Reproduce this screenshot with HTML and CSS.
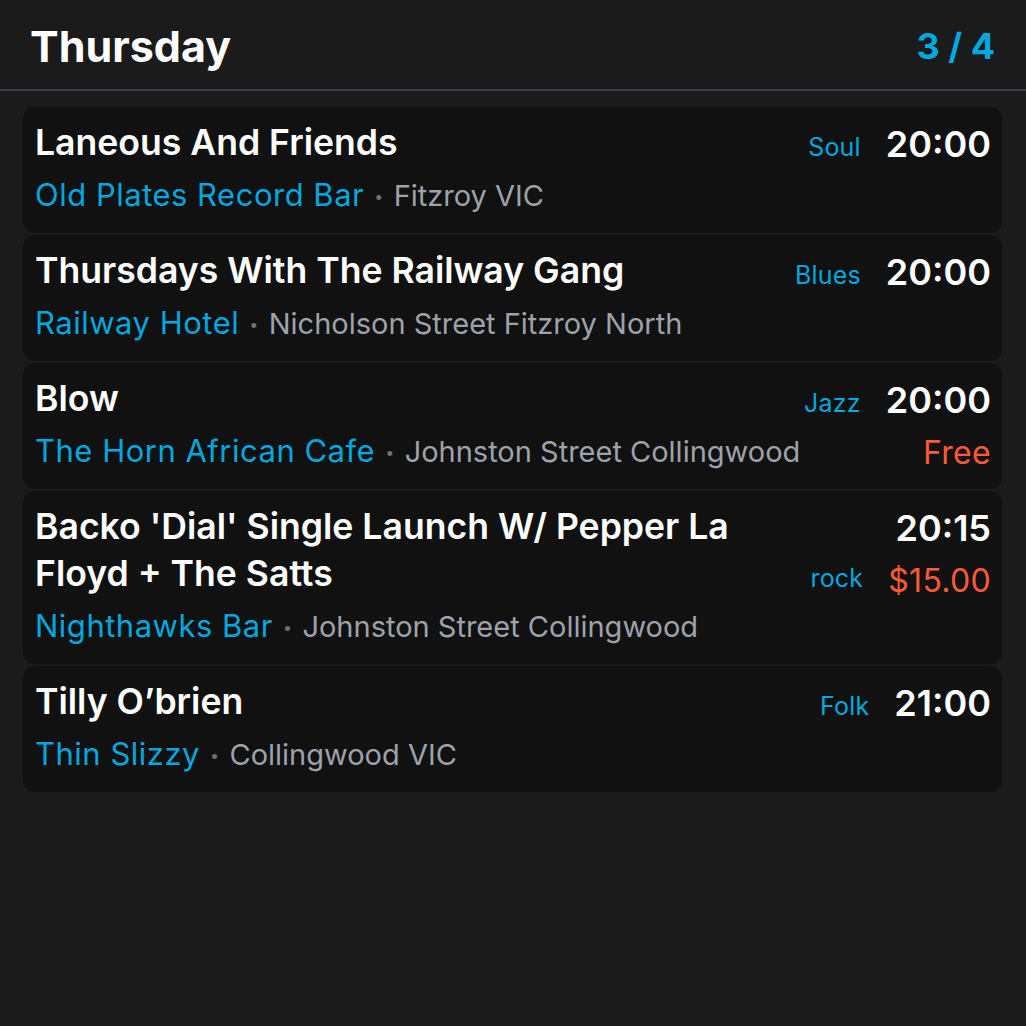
FILE: index.html
```html
<!DOCTYPE html>
<html lang="en">
<head>
<meta charset="utf-8">
<title>Thursday</title>
<link rel="stylesheet" href="styles.css">
</head>
<body>
<div class="app">
  <header class="header">
    <h1 class="day">Thursday</h1>
    <div class="counter">3 / 4</div>
  </header>
  <main class="list">
    <article class="card">
      <div class="title">Laneous And Friends</div>
      <div class="genre">Soul</div>
      <div class="when"><div class="time">20:00</div></div>
      <div class="venue"><span class="place">Old Plates Record Bar</span><span class="dot">•</span><span class="loc">Fitzroy VIC</span></div>
    </article>
    <article class="card">
      <div class="title">Thursdays With The Railway Gang</div>
      <div class="genre">Blues</div>
      <div class="when"><div class="time">20:00</div></div>
      <div class="venue"><span class="place">Railway Hotel</span><span class="dot">•</span><span class="loc">Nicholson Street Fitzroy North</span></div>
    </article>
    <article class="card">
      <div class="title">Blow</div>
      <div class="genre">Jazz</div>
      <div class="when"><div class="time">20:00</div><div class="price">Free</div></div>
      <div class="venue"><span class="place">The Horn African Cafe</span><span class="dot">•</span><span class="loc">Johnston Street Collingwood</span></div>
    </article>
    <article class="card">
      <div class="title">Backo 'Dial' Single Launch W/ Pepper La Floyd + The Satts</div>
      <div class="genre">rock</div>
      <div class="when"><div class="time">20:15</div><div class="price">$15.00</div></div>
      <div class="venue"><span class="place">Nighthawks Bar</span><span class="dot">•</span><span class="loc">Johnston Street Collingwood</span></div>
    </article>
    <article class="card">
      <div class="title">Tilly O’brien</div>
      <div class="genre">Folk</div>
      <div class="when"><div class="time">21:00</div></div>
      <div class="venue"><span class="place">Thin Slizzy</span><span class="dot">•</span><span class="loc">Collingwood VIC</span></div>
    </article>
  </main>
</div>
</body>
</html>
```
FILE: styles.css
```css
* { box-sizing: border-box; }
html, body {
  margin: 0;
  padding: 0;
  background: #1b1b1b;
  font-family: Inter, "Noto Sans", sans-serif;
  color: #ffffff;
}
.app {
  width: 1026px;
  min-height: 1026px;
  background: #1b1b1b;
}
.header {
  display: flex;
  align-items: center;
  justify-content: space-between;
  height: 91px;
  padding: 2px 31px 0 30px;
  border-bottom: 2px solid #3a404b;
}
.day {
  margin: 0;
  font-size: 43px;
  font-weight: 700;
  line-height: 50px;
}
.counter {
  font-size: 36px;
  font-weight: 700;
  line-height: 50px;
  color: #00a8df;
}
.list {
  display: flex;
  flex-direction: column;
  gap: 2px;
  padding: 16px 24px 0 23px;
}
.card {
  display: grid;
  grid-template-columns: 1fr auto auto;
  grid-template-rows: auto auto;
  column-gap: 25px;
  background: #111111;
  border-radius: 12px;
  padding: 12px 11px 16px 12px;
}
.title {
  grid-column: 1;
  grid-row: 1;
  font-size: 35.6px;
  font-weight: 600;
  line-height: 47px;
  padding-right: 10px;
}
.genre {
  grid-column: 2;
  grid-row: 1;
  align-self: end;
  font-size: 25px;
  line-height: 38px;
  letter-spacing: 0.2px;
  color: #00a8df;
}
.when {
  grid-column: 3;
  grid-row: 1 / span 2;
  display: flex;
  flex-direction: column;
  align-items: flex-end;
}
.time {
  margin-top: 2px;
  font-size: 36px;
  font-weight: 600;
  line-height: 46px;
}
.price {
  margin-top: 15px;
  font-size: 32px;
  line-height: 30px;
  letter-spacing: 0.3px;
  color: #ff5a36;
}
.venue {
  grid-column: 1 / span 2;
  grid-row: 2;
  margin-top: 8px;
  font-size: 31px;
  line-height: 42px;
  letter-spacing: 0.5px;
  white-space: nowrap;
}
.place { color: #00a8df; }
.dot {
  display: inline-block;
  margin: 0 10px;
  font-size: 16px;
  color: #6b717c;
  vertical-align: 4px;
}
.loc {
  font-size: 29px;
  letter-spacing: 0;
  color: #9da2ab;
}
```
